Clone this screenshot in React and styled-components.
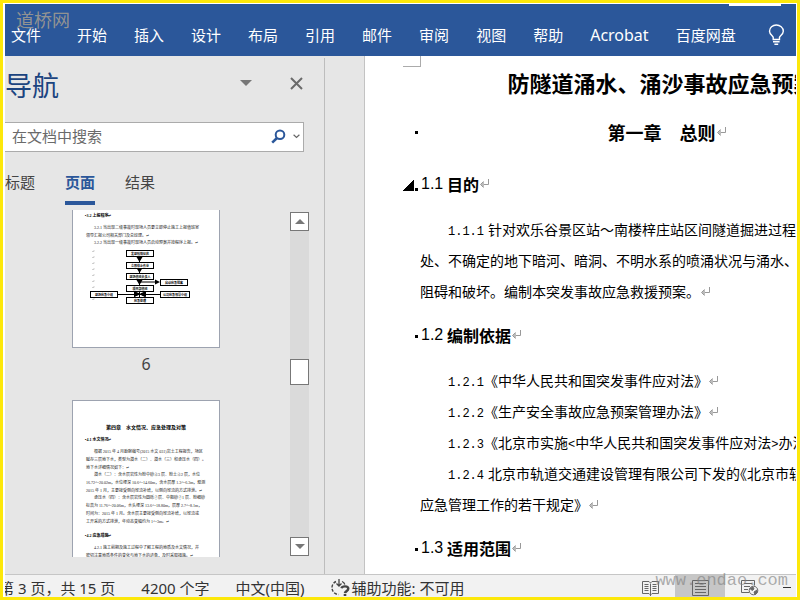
import styled, { createGlobalStyle, css } from 'styled-components';

const GlobalStyle = createGlobalStyle`
  * {
    box-sizing: border-box;
  }

  body {
    margin: 0;
    background: #fff;
    font-family: 'Noto Sans', 'Noto Sans CJK SC', sans-serif;
    font-size: 15px;
  }

  button {
    padding: 0;
    border: 0;
    background: none;
    color: inherit;
    font: inherit;
    cursor: pointer;
  }

  h1, h2, h3, p {
    margin: 0;
    font-weight: inherit;
  }

  svg {
    display: block;
    flex: none;
  }
`;

const Frame = styled.div`
  position: relative;
  height: 100vh;
  padding: 1px 1px 0 2px;
  border: 3px solid #fde80a;
  overflow: hidden;
`;

const Window = styled.div`
  display: flex;
  flex-direction: column;
  height: 100%;
  overflow: hidden;
`;

/* ---------- ribbon ---------- */

const Ribbon = styled.header`
  flex: none;
  height: 52px;
  background: #2b579a;
  color: #fff;
`;

const TitleEdge = styled.div`
  display: flex;
  justify-content: flex-end;
  height: 2px;
  padding-right: 15px;

  &::after {
    content: '';
    width: 52px;
    background: #fff;
  }
`;

const RibbonTabs = styled.nav`
  display: flex;
  align-items: center;
  gap: 27px;
  height: 50px;
  padding: 8px 11px 0 6px;
  white-space: nowrap;
`;

const RibbonTab = styled.button`
  && {
    font-size: ${({ $latin }) => ($latin ? 16 : 15)}px;
    line-height: 24px;
  }

  &:first-child {
    margin-right: 9px;
  }

  &:last-child {
    margin-left: auto;
  }
`;

/* ---------- navigation pane ---------- */

const Body = styled.div`
  display: flex;
  flex: 1;
  min-height: 0;
  background: #e6e6e6;
`;

const NavPane = styled.aside`
  display: flex;
  flex-direction: column;
  flex: none;
  width: 320px;
  margin-top: 2px;
  border-right: 1px solid #bdbdbd;
`;

const NavHeader = styled.div`
  display: flex;
  align-items: center;
  flex: none;
  height: 64px;
  padding: 0 21px 8px 0;

  h2 {
    flex: 1;
    color: #1b4480;
    font-size: 27px;
    line-height: 40px;
  }

  button {
    padding-bottom: 6px;
  }

  button + button {
    margin-left: 38px;
  }
`;

const SearchBox = styled.label`
  display: flex;
  align-items: center;
  flex: none;
  height: 30px;
  margin-right: 20px;
  padding: 0 3px 0 7px;
  border: 1px solid #ababab;
  border-left: 0;
  background: #fff;

  input {
    flex: 1;
    min-width: 0;
    padding: 0 0 3px;
    border: 0;
    outline: 0;
    background: none;
    color: #444;
    font: inherit;
  }

  input::placeholder {
    color: #6a6a6a;
    opacity: 1;
  }

  button {
    padding-bottom: 2px;
  }

  button + button {
    margin-left: 7px;
  }
`;

const NavTabs = styled.div`
  display: flex;
  align-items: flex-end;
  flex: none;
  height: 53px;
`;

const NavTab = styled.button`
  && {
    height: 40px;
    margin-right: 30px;
    padding-bottom: 2px;
    border-bottom: 4px solid transparent;
    color: #444;
    line-height: 24px;

    ${({ $active }) =>
      $active &&
      css`
        border-color: #2b579a;
        color: #2b579a;
        font-weight: 700;
      `}
  }
`;

const PageBrowser = styled.div`
  display: flex;
  justify-content: space-between;
  flex: 1;
  min-height: 0;
  margin: 5px 15px 17px 67px;
`;

const ThumbList = styled.div`
  width: 148px;
  overflow: hidden;
`;

const Thumb = styled.div`
  height: ${({ $continued }) => ($continued ? 138 : 208)}px;
  padding: ${({ $continued }) => ($continued ? 2 : 23)}px 12px 0;
  border: 1px solid #9da3b0;
  border-top-width: ${({ $continued }) => ($continued ? 0 : 1)}px;
  background: #fff;
  color: #222;
  font-family: 'Liberation Serif', 'Noto Sans CJK SC', serif;
  font-size: 4px;
  line-height: 8px;
  white-space: nowrap;

  h2 {
    margin-bottom: 4px;
    color: #000;
    font-size: 5px;
    font-weight: 700;
    text-align: center;
  }

  h3 {
    margin-bottom: 4px;
    color: #000;
    font-size: 4px;
    font-weight: 700;
  }

  p {
    margin-bottom: -1px;
    padding-left: 1px;
    text-indent: 8px;
  }

  p + h3 {
    margin-top: 7px;
  }

  p + svg {
    margin-top: 4px;
  }
`;

const ThumbLine = styled.span`
  display: block;

  & + & {
    text-indent: 0;
  }
`;

const ThumbLabel = styled.div`
  height: 52px;
  padding-bottom: 20px;
  color: #444;
  font-size: 16px;
  line-height: 32px;
  text-align: center;
`;

const Scrollbar = styled.div`
  display: flex;
  flex-direction: column;
  width: 19px;
  margin: 2px 0 1px;
  background: #dadada;
`;

const ScrollButton = styled.button`
  && {
    display: flex;
    align-items: center;
    justify-content: center;
    height: 19px;
    border: 1px solid #777;
    background: #fff;
  }
`;

const ScrollTrack = styled.div`
  flex: 1;
  padding-top: 128px;
`;

const ScrollThumb = styled.div`
  height: 26px;
  border: 1px solid #777;
  background: #fff;
`;

/* ---------- document ---------- */

const Page = styled.main`
  position: relative;
  flex: 1;
  min-width: 0;
  margin-left: 39px;
  padding-left: 38px;
  border-left: 1px solid #c3c3c3;
  background: #fff;
  color: #000;
  font-family: 'Noto Sans CJK SC', sans-serif;
  overflow: hidden;
`;

const MarginCorner = styled.div`
  position: absolute;
  top: 0;
  left: 38px;
  width: 18px;
  height: 11px;
  border: solid #ababab;
  border-width: 0 1px 1px 0;
`;

const Sheet = styled.div`
  width: 511px;
  white-space: nowrap;
`;

const Line = styled.div`
  display: flex;
  align-items: center;
`;

const Gutter = styled.span`
  display: flex;
  align-items: flex-end;
  justify-content: flex-end;
  flex: none;
  gap: 1px;
  width: 15px;
  margin-right: 3px;

  &::after {
    content: '';
    width: 3px;
    height: 3px;
    background: #000;
  }
`;

const Collapse = styled.span`
  width: 11px;
  height: 11px;
  background: linear-gradient(135deg, transparent 50%, #000 50%);
`;

const DocTitle = styled.h1`
  display: flex;
  justify-content: center;
  align-items: center;
  height: 52px;
  margin-left: 18px;
  font-size: 22px;
  font-weight: 700;
`;

const Chapter = styled.h2`
  display: flex;
  flex: 1;
  align-items: center;
  justify-content: center;
  height: 48px;
  font-size: 18px;
  font-weight: 700;
`;

const Section = styled.h3`
  display: flex;
  align-items: center;
  height: 58px;
  padding-bottom: 2px;
  font-size: 16px;
  font-weight: 700;
`;

const SectionNumber = styled.span`
  width: 26px;
  font-family: 'Liberation Sans', sans-serif;
  font-weight: 400;
`;

const Paragraph = styled.p`
  margin-left: 17px;
  padding-left: 28px;
  font-size: 14px;
  line-height: 31px;
`;

const TextLine = styled.span`
  display: block;
  height: 31px;

  & + & {
    margin-left: -28px;
  }

  svg {
    display: inline-block;
  }
`;

const Num = styled.span`
  margin-right: ${({ $gap }) => ($gap ? 4 : 0)}px;
  font-family: 'Liberation Mono', monospace;
  font-size: 12px;
  line-height: 1;
`;

const HalfMark = styled.span`
  font-feature-settings: 'halt';
`;

/* ---------- status bar ---------- */

const StatusBar = styled.footer`
  display: flex;
  align-items: center;
  flex: none;
  height: 23px;
  padding: 3px 5px 0 0;
  border-top: 1px solid #c6c6c6;
  background: #f2f2f2;
  color: #333;
  line-height: 18px;
  white-space: nowrap;
`;

const StatusItem = styled.button`
  && {
    display: flex;
    align-items: center;
    gap: 2px;
    margin-right: 26px;
  }

  &:first-child {
    margin-left: -6px;
  }
`;

const ViewButtons = styled.div`
  display: flex;
  align-self: stretch;
  margin: -3px 0 0 auto;
`;

const ViewButton = styled.button`
  && {
    display: flex;
    align-items: center;
    justify-content: center;
    width: 50px;
    padding-top: 4px;
    background: ${({ $active }) => ($active ? '#c6c6c6' : 'none')};
  }
`;

const ZoomOut = styled.button`
  && {
    width: 8px;
    height: 18px;
    margin-left: 8px;
  }
`;

/* ---------- watermarks ---------- */

const SiteMark = styled.span`
  position: absolute;
  top: 4px;
  left: 13px;
  color: rgba(160, 155, 145, 0.9);
  font-family: 'Noto Sans CJK SC', sans-serif;
  font-size: 18px;
  line-height: 24px;
  pointer-events: none;
`;

const UrlMark = styled.span`
  position: absolute;
  right: 9px;
  bottom: 4px;
  color: rgba(130, 130, 130, 0.65);
  font-family: 'Liberation Mono', monospace;
  font-size: 17px;
  line-height: 24px;
  pointer-events: none;
`;

/* ---------- icons ---------- */

const BulbIcon = () => (
  <svg width="17" height="22" viewBox="0 0 17 22" fill="none" stroke="#fff" strokeWidth="1.4">
    <path d="M5.2 15.5V13.3C4.8 11.8 1.5 10.3 1.5 7.2C1.5 3.6 4.6 1 8.3 1s7 2.6 7 6.2c0 3.1-3.4 4.6-3.8 6.1v2.2z" />
    <path d="M5 17.7h6.6M6.4 20.3h3.8" />
  </svg>
);

const TriangleIcon = ({ up, width = 10, height = 5 }) => (
  <svg width={width} height={height} viewBox="0 0 10 5" preserveAspectRatio="none">
    <path d={up ? 'M0 5 5 0l5 5z' : 'M0 0h10L5 5z'} fill="#777" />
  </svg>
);

const CloseIcon = () => (
  <svg width="13" height="13" viewBox="0 0 13 13" stroke="#6a6a6a" strokeWidth="2">
    <path d="M1 1l11 11M12 1 1 12" />
  </svg>
);

const SearchIcon = () => (
  <svg width="15" height="15" viewBox="0 0 15 15" fill="none" stroke="#2b579a">
    <circle cx="9" cy="5.8" r="4.3" strokeWidth="2" />
    <path d="M6 9 1.2 13.6" strokeWidth="2.6" />
  </svg>
);

const ChevronIcon = () => (
  <svg width="7" height="5" viewBox="0 0 7 5" fill="none" stroke="#666" strokeWidth="1.2">
    <path d="M.6.8l2.9 2.7L6.4.8" />
  </svg>
);

const ReturnMark = () => (
  <svg width="12" height="10" viewBox="0 0 12 10" fill="none" stroke="#999">
    <path d="M9.500 0v5.500H2" />
    <path d="M5 2.500 1.500 5.500 5 8.500z" fill="#bbb" stroke="none" />
    <path d="M4.500 2.500l-3 3 3 3" />
  </svg>
);

const AccessibilityIcon = () => (
  <svg width="19" height="17" viewBox="0 0 19 17" fill="none" stroke="#444">
    <path d="M5 2.5A6.8 6.8 0 0 0 7.5 15.5" strokeWidth="1.4" strokeDasharray="3 1.4" />
    <path d="M8 0v6.5M5.5 4.5 8 7l2.5-2.5M11 2.5c1.5.6 2.4 1.6 2.8 3" strokeWidth="1.3" />
    <path d="M10.5 9.3c.6-2.6 6.8-2.7 6.8.5 0 2.4-3.2 2.2-3.4 4.4" strokeWidth="2.4" />
    <path d="M12.7 16h2.6" strokeWidth="2" />
  </svg>
);

const ReadModeIcon = () => (
  <svg width="17" height="15" viewBox="0 0 17 15" fill="none" stroke="#666">
    <path d="M8.5 2.5V15M8.5 2 7 .5H.5v12H7l1.5 1.5 1.5-1.5h6.5V.5H10z" />
    <path d="M2.5 3.5h4M2.5 5.5h4M2.5 7.5h4M2.5 9.5h4M10.5 3.5h4M10.5 5.5h4M10.5 7.5h4M10.5 9.5h4" />
  </svg>
);

const PrintLayoutIcon = () => (
  <svg width="17" height="16" viewBox="0 0 17 16" fill="none" stroke="#666">
    <path d="M.5.5h16v15H.5zM3 3.5h11M3 6.5h11M3 9.5h11M3 12.5h11" />
  </svg>
);

const WebLayoutIcon = () => (
  <svg width="18" height="16" viewBox="0 0 18 16" fill="none" stroke="#666">
    <path d="M8 12.5H.5V.5h13v5M3 3.5h8M3 6.5h6M3 9.5h4" />
    <circle cx="12.5" cy="10.5" r="4.3" fill="#f2f2f2" />
    <path d="M9 8.5l3-1.5 1 2-2 1.5zM13 12l3-2v3l-2 1.5z" fill="#666" />
  </svg>
);

const chartBoxes = [
  [41, 0, 27, '发现险情征兆'],
  [41, 12, 27, '立即停止作业'],
  [41, 23, 27, '现场值班负责人'],
  [75, 29, 27, '启动应急预案'],
  [41, 35, 27, '项目部值班'],
  [5, 41, 27, '现场应急小组'],
  [75, 41, 29, '公司应急领导小组'],
  [41, 47, 27, '应急处理'],
];

const FlowChart = () => (
  <svg width="110" height="56" viewBox="0 0 110 56">
    {[0, 6, 12, 18, 24, 30, 36, 48].map((y) => (
      <path key={y} d={`M7 ${y + 1.5}h2v-1.5`} fill="none" stroke="#bbb" strokeWidth=".7" />
    ))}
    <path d="M54.5 6v43M54.5 32H73M32 44.5h43" stroke="#000" fill="none" />
    <path d="M51.5 7h6l-3 5zM51.5 18h6l-3 5zM51.5 30h6l-3 5zM70 29.5v5l5-2.5zM49 41l7 3-7 3zM61 41l-7 3 7 3z" />
    {chartBoxes.map(([x, y, width, label]) => (
      <g key={label}>
        <rect x={x + 0.5} y={y + 0.5} width={width} height="6" fill="#fff" stroke="#000" />
        <text x={x + width / 2 + 0.5} y={y + 5} fontSize="3" fontWeight="700" textAnchor="middle">
          {label}
        </text>
      </g>
    ))}
    <path d="M49 42l5 2.500-5 2.500zM60 42l-5 2.500 5 2.500z" />
  </svg>
);

/* ---------- data ---------- */

const ribbonTabs = [
  '文件', '开始', '插入', '设计', '布局', '引用', '邮件', '审阅', '视图', '帮助', 'Acrobat', '百度网盘',
];

const waterReport = [
  [
    '根据 2015 年 4 月勘察编号(2015 水文 031)岩土工程报告，场区',
    '赋存三层地下水，类型为潜水（二）、潜水（三）和承压水（四）。',
    '地下水详细情况如下：↵',
  ],
  [
    '潜水（二）：含水层岩性为粉中砂②3 层、粉土②2 层，水位',
    '16.72～20.02m，水位埋深 10.6～14.60m，含水层厚 1.3～6.3m，观测',
    '2015 年 1 月，主要接受侧向径流补给，以侧向径流的方式排泄。↵',
  ],
  [
    '承压水（四）：含水层岩性为圆砾⑦层、中粗砂⑦1 层、粉细砂',
    '标高为 11.76～20.06m，水头埋深 13.6～18.80m，层厚 2.7～8.1m，',
    '时间为：2015 年 1 月。含水层主要接受侧向径流补给，以径流或',
    '工开采的方式排泄，年动态变幅约为 1～3m。↵',
  ],
];

const ThumbParagraph = ({ lines }) => (
  <p>
    {lines.map((line) => (
      <ThumbLine key={line}>{line}</ThumbLine>
    ))}
  </p>
);

const NavigationPane = () => (
  <NavPane>
    <NavHeader>
      <h2>导航</h2>
      <button aria-label="任务窗格选项">
        <TriangleIcon width={12} height={6} />
      </button>
      <button aria-label="关闭">
        <CloseIcon />
      </button>
    </NavHeader>
    <SearchBox>
      <input type="text" placeholder="在文档中搜索" aria-label="在文档中搜索" />
      <button aria-label="搜索">
        <SearchIcon />
      </button>
      <button aria-label="搜索选项">
        <ChevronIcon />
      </button>
    </SearchBox>
    <NavTabs>
      <NavTab>标题</NavTab>
      <NavTab $active>页面</NavTab>
      <NavTab>结果</NavTab>
    </NavTabs>
    <PageBrowser>
      <ThumbList>
        <Thumb $continued>
          <h3>▪3.2 上报程序↵</h3>
          <ThumbParagraph
            lines={[
              '3.2.1 当出现二级事故时现场人员要立即停止施工上报值班室',
              '领导汇报公司相关部门及总经理。↵',
            ]}
          />
          <ThumbParagraph lines={['3.2.2 当出现一级事故时现场人员启动预案并按程序上报。↵']} />
          <FlowChart />
        </Thumb>
        <ThumbLabel>6</ThumbLabel>
        <Thumb>
          <h2>第四章　水文情况、应急处理及对策</h2>
          <h3>▪4.1 水文情况↵</h3>
          {waterReport.map((lines) => (
            <ThumbParagraph key={lines[0]} lines={lines} />
          ))}
          <h3>▪4.2 应急措施↵</h3>
          <ThumbParagraph
            lines={[
              '4.2.1 施工前期及施工过程中了解工程的地质及水文情况，并',
              '密切注意地质条件的变化与地下水的迹象，及时采取措施。↵',
            ]}
          />
        </Thumb>
      </ThumbList>
      <Scrollbar>
        <ScrollButton aria-label="向上滚动">
          <TriangleIcon up />
        </ScrollButton>
        <ScrollTrack>
          <ScrollThumb />
        </ScrollTrack>
        <ScrollButton aria-label="向下滚动">
          <TriangleIcon />
        </ScrollButton>
      </Scrollbar>
    </PageBrowser>
  </NavPane>
);

const SectionHeading = ({ number, title, collapsible }) => (
  <Line>
    <Gutter>{collapsible && <Collapse />}</Gutter>
    <Section>
      <SectionNumber>{number}</SectionNumber>
      {title}
      <ReturnMark />
    </Section>
  </Line>
);

const Document = () => (
  <Page>
    <MarginCorner />
    <Sheet>
      <DocTitle>
        防隧道涌水、涌沙事故应急预案
        <ReturnMark />
      </DocTitle>
      <Line>
        <Gutter />
        <Chapter>
          第一章　总则
          <ReturnMark />
        </Chapter>
      </Line>
      <SectionHeading number="1.1" title="目的" collapsible />
      <Paragraph>
        <TextLine>
          <Num $gap>1.1.1</Num>针对欢乐谷景区站～南楼梓庄站区间隧道掘进过程
        </TextLine>
        <TextLine>处、不确定的地下暗河、暗洞、不明水系的喷涌状况与涌水、</TextLine>
        <TextLine>
          阻碍和破坏。编制本突发事故应急救援预案。
          <ReturnMark />
        </TextLine>
      </Paragraph>
      <SectionHeading number="1.2" title="编制依据" />
      <Paragraph>
        <TextLine>
          <Num>1.2.1</Num>《中华人民共和国突发事件应对法》
          <ReturnMark />
        </TextLine>
      </Paragraph>
      <Paragraph>
        <TextLine>
          <Num>1.2.2</Num>《生产安全事故应急预案管理办法》
          <ReturnMark />
        </TextLine>
      </Paragraph>
      <Paragraph>
        <TextLine>
          <Num>1.2.3</Num>《北京市实施<Num>&lt;</Num>中华人民共和国突发事件应对法<Num>&gt;</Num>办法
        </TextLine>
      </Paragraph>
      <Paragraph>
        <TextLine>
          <Num $gap>1.2.4</Num>北京市轨道交通建设管理有限公司下发的<HalfMark>《</HalfMark>北京市轨
        </TextLine>
        <TextLine>
          应急管理工作的若干规定》
          <ReturnMark />
        </TextLine>
      </Paragraph>
      <SectionHeading number="1.3" title="适用范围" />
    </Sheet>
  </Page>
);

const App = () => (
  <Frame>
    <GlobalStyle />
    <Window>
      <Ribbon>
        <TitleEdge />
        <RibbonTabs>
          {ribbonTabs.map((tab) => (
            <RibbonTab key={tab} $latin={tab === 'Acrobat'}>
              {tab}
            </RibbonTab>
          ))}
          <RibbonTab aria-label="操作说明搜索">
            <BulbIcon />
          </RibbonTab>
        </RibbonTabs>
      </Ribbon>
      <Body>
        <NavigationPane />
        <Document />
      </Body>
      <StatusBar>
        <StatusItem>第 3 页，共 15 页</StatusItem>
        <StatusItem>4200 个字</StatusItem>
        <StatusItem>中文(中国)</StatusItem>
        <StatusItem>
          <AccessibilityIcon />
          辅助功能: 不可用
        </StatusItem>
        <ViewButtons>
          <ViewButton aria-label="阅读视图">
            <ReadModeIcon />
          </ViewButton>
          <ViewButton $active aria-label="页面视图">
            <PrintLayoutIcon />
          </ViewButton>
          <ViewButton aria-label="Web 版式视图">
            <WebLayoutIcon />
          </ViewButton>
        </ViewButtons>
        <ZoomOut aria-label="缩小">
          <svg width="8" height="1" viewBox="0 0 8 1">
            <path d="M0 0h8v1H0z" fill="#333" />
          </svg>
        </ZoomOut>
      </StatusBar>
    </Window>
    <SiteMark>道桥网</SiteMark>
    <UrlMark>www.endao.com</UrlMark>
  </Frame>
);

export default App;
